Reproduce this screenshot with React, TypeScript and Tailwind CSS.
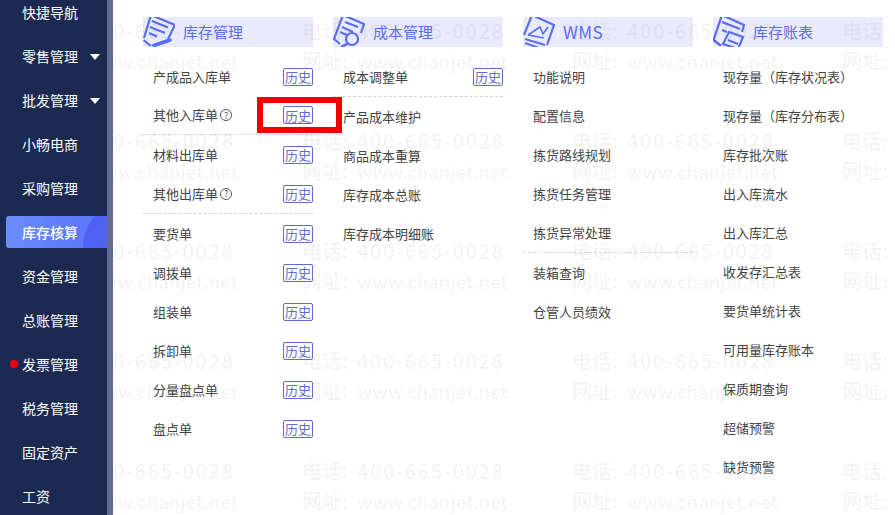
import React from 'react';

const FONT = "font-['Noto_Sans_CJK_SC','Noto_Sans',sans-serif]";

const navItems = ['快捷导航', '零售管理', '批发管理', '小畅电商', '采购管理', '库存核算', '资金管理', '总账管理', '发票管理', '税务管理', '固定资产', '工资'];
const withCaret = ['零售管理', '批发管理'];

type Row = { label: string; history?: boolean; help?: boolean; dashed?: boolean; tall?: boolean };

const iconClass = 'h-[30px] w-[32px]';

const StockIcon = () => (
  <svg viewBox="0 0 32 30" className={iconClass} fill="none" stroke="#5a6cf0" strokeWidth="2.2">
    <path d="M8 -2 L32 8 L25 22 M1 21 L8 -2" />
    <path d="M9 4 L25 10.5 M7 10 L22 16 M6 16 L14 19.5" strokeWidth="2.4" />
    <path d="M0.5 23 L8 29" />
    <path d="M11 28.5 L27 23" strokeWidth="3.6" strokeLinecap="round" />
  </svg>
);

const CostIcon = () => (
  <svg viewBox="0 0 32 30" className={iconClass} fill="none" stroke="#5a6cf0" strokeWidth="2.2">
    <path d="M10 -2 L31 7 L28 16 M7 27 L1 22 L10 -2" />
    <path d="M12 5 L25 10 M9 10 L20 15 M7 15 L14 18" strokeWidth="2.2" />
    <circle cx="19" cy="22" r="6" />
    <path d="M14 27 L9 29.5" strokeWidth="2.6" strokeLinecap="round" />
  </svg>
);

const WmsIcon = () => (
  <svg viewBox="0 0 32 30" className={iconClass} fill="none" stroke="#5a6cf0" strokeWidth="2.2">
    <path d="M9 -2 L31 8 L24 28 M1 18 L9 -2" />
    <path d="M5 18 L17 10 L20 17 L25 10 M5 18 L21 21" strokeWidth="1.6" />
    <path d="M2 22 L22 28 M2 26 L19 32" strokeWidth="2" />
  </svg>
);

const LedgerIcon = () => (
  <svg viewBox="0 0 32 30" className={iconClass} fill="none" stroke="#5a6cf0" strokeWidth="2.2">
    <path d="M9 -2 L31 8 L29 15 M0.5 23 L9 -2" />
    <path d="M9 5 L27 12 M9 13 L14 15" strokeWidth="2.2" />
    <path d="M16 15 L30 20 L25 32 L10 27 Z" strokeWidth="2.2" />
    <path d="M15 23 L25 27" strokeWidth="2" />
    <path d="M0.5 23 L7 28" strokeWidth="2.6" strokeLinecap="round" />
  </svg>
);

const columns: { title: string; icon: React.ReactNode; rows: Row[] }[] = [
  {
    title: '库存管理',
    icon: <StockIcon />,
    rows: [
      { label: '产成品入库单', history: true },
      { label: '其他入库单', history: true, help: true, dashed: true },
      { label: '材料出库单', history: true },
      { label: '其他出库单', history: true, help: true, dashed: true, tall: true },
      { label: '要货单', history: true },
      { label: '调拨单', history: true },
      { label: '组装单', history: true },
      { label: '拆卸单', history: true },
      { label: '分量盘点单', history: true },
      { label: '盘点单', history: true },
    ],
  },
  {
    title: '成本管理',
    icon: <CostIcon />,
    rows: [
      { label: '成本调整单', history: true, dashed: true, tall: true },
      { label: '产品成本维护' },
      { label: '商品成本重算' },
      { label: '库存成本总账' },
      { label: '库存成本明细账' },
    ],
  },
  {
    title: 'WMS',
    icon: <WmsIcon />,
    rows: [
      { label: '功能说明' },
      { label: '配置信息' },
      { label: '拣货路线规划' },
      { label: '拣货任务管理' },
      { label: '拣货异常处理', dashed: true, tall: true },
      { label: '装箱查询' },
      { label: '仓管人员绩效' },
    ],
  },
  {
    title: '库存账表',
    icon: <LedgerIcon />,
    rows: [
      { label: '现存量（库存状况表）' },
      { label: '现存量（库存分布表）' },
      { label: '库存批次账' },
      { label: '出入库流水' },
      { label: '出入库汇总' },
      { label: '收发存汇总表' },
      { label: '要货单统计表' },
      { label: '可用量库存账本' },
      { label: '保质期查询' },
      { label: '超储预警' },
      { label: '缺货预警' },
    ],
  },
];

const HelpIcon = () => (
  <span className="ml-[2px] flex h-[12px] w-[12px] items-center justify-center rounded-full border border-[#555] text-[9px] leading-none text-[#555]">?</span>
);

const Sidebar = () => (
  <aside className="flex h-full w-[113px] shrink-0 border-r-[6px] border-[#626c8e] bg-[#1c2a52] pl-[6px]">
    <nav className="-mt-[10px] flex w-full flex-col">
      {navItems.map(item => (
        <div key={item} className="relative flex h-[44px] shrink-0 items-center">
          {item === '库存核算' ? (
            <div className="relative flex h-[32px] w-full items-center overflow-hidden rounded-l-[3px] bg-gradient-to-r from-[#6a8dfb] to-[#5a72f8] pl-[16px] text-[14px] font-medium text-white">
              <span className="absolute left-[77px] top-[-17px] h-[97px] w-[97px] rounded-full bg-[#4f60f5]" />
              <span className="relative">{item}</span>
            </div>
          ) : (
            <span className="pl-[16px] text-[14px] text-white">{item}</span>
          )}
          {item === '发票管理' && <span className="absolute left-[4px] top-[18px] h-[8px] w-[8px] rounded-full bg-[#f5000f]" />}
          {withCaret.includes(item) && (
            <span className="absolute left-[84px] top-[20px] h-0 w-0 border-x-[5px] border-t-[6px] border-x-transparent border-t-white" />
          )}
        </div>
      ))}
    </nav>
  </aside>
);

const MenuColumn = ({ title, icon, rows }: { title: string; icon: React.ReactNode; rows: Row[] }) => (
  <section className="w-[170px] shrink-0">
    <header className="flex h-[30px] items-center overflow-hidden bg-[#e9ebfc]">
      <span className="w-[40px] shrink-0">{icon}</span>
      <h3 className={title === 'WMS' ? 'text-[17px] tracking-[0.4px] text-[#5a6cf0]' : 'text-[15px] text-[#5a6cf0]'}>{title}</h3>
    </header>
    <ul className="mt-[10px]">
      {rows.map(row => (
        <li
          key={row.label}
          className={`flex items-center justify-between pl-[10px] ${row.tall ? 'h-[40px]' : 'h-[39px]'} ${row.dashed ? 'border-b border-dashed border-[#d5d5d5]' : ''}`}
        >
          <span className="flex items-center text-[13px] text-[#444]">
            {row.label}
            {row.help && <HelpIcon />}
          </span>
          {row.history && (
            <span className="flex h-[18px] w-[30px] items-center justify-center rounded-[2px] border border-[#5f6cd0] text-[13px] leading-none text-[#5f6cd0]">历史</span>
          )}
        </li>
      ))}
    </ul>
  </section>
);

const watermarkRows = [0, 1, 2, 3, 4];
const watermarkCols = [0, 1, 2, 3];

// repeated contact watermark, painted over the menu
const Watermark = () => (
  <div className="pointer-events-none absolute inset-0 overflow-hidden pl-[32px] pt-[18px]">
    <div className="flex w-[1080px] flex-wrap">
      {watermarkRows.map(r =>
        watermarkCols.map(c => (
          <div key={`${r}-${c}`} className="h-[110px] w-[270px] text-[20px] font-medium text-[#7f8496]/10">
            <p className="flex h-[30px] items-baseline leading-[26px] whitespace-nowrap">
              <span className="w-[55px]">电话:</span>
              <span className="tracking-[1.6px]">400-665-0028</span>
            </p>
            <p className="flex h-[30px] items-baseline leading-[26px] whitespace-nowrap">
              <span className="w-[55px]">网址:</span>
              <span className="text-[18.5px]">www.chanjet.net</span>
            </p>
          </div>
        )),
      )}
    </div>
  </div>
);

export default function App() {
  return (
    <div className={`relative flex h-[515px] w-[895px] overflow-hidden bg-white ${FONT}`}>
      <main className="absolute inset-y-0 left-[113px] right-0 flex gap-[20px] pl-[30px] pt-[17px]">
        {columns.map(col => (
          <MenuColumn key={col.title} title={col.title} icon={col.icon} rows={col.rows} />
        ))}
      </main>
      <Watermark />
      <div className="relative z-10 h-full">
        <Sidebar />
      </div>
      <div className="absolute left-[257px] top-[97px] z-20 h-[36px] w-[85px] border-[6px] border-[#f00000]" />
    </div>
  );
}
